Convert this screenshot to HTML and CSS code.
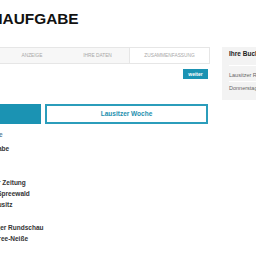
FILE: index.html
```html
<!DOCTYPE html>
<html lang="de">
<head>
<meta charset="utf-8">
<title>Anzeigenaufgabe</title>
<link rel="stylesheet" href="styles.css">
</head>
<body>
<div class="page">
  <main class="main">
    <h1 class="title">ANZEIGENAUFGABE</h1>
    <nav class="steps">
      <span class="step">Ausgabe</span>
      <span class="step">Anzeige</span>
      <span class="step">Ihre Daten</span>
      <span class="step step-current">Zusammenfassung</span>
    </nav>
    <div class="actions"><button class="btn-next">weiter</button></div>
    <div class="choice">
      <button class="opt opt-active">Lausitzer Rundschau</button>
      <button class="opt">Lausitzer Woche</button>
    </div>
    <div class="editions">
      <ul class="group group-top">
        <li class="item item-link">Sämtliche</li>
        <li class="item">Teilausgabe</li>
      </ul>
      <ul class="group">
        <li class="item">Lausitzer Zeitung</li>
        <li class="item">Lübben Spreewald</li>
        <li class="item">Niederlausitz</li>
      </ul>
      <ul class="group">
        <li class="item">Herzberger Rundschau</li>
        <li class="item">Kreis Spree-Neiße</li>
      </ul>
    </div>
  </main>
  <aside class="side">
    <h2 class="side-title">Ihre Buchung</h2>
    <p class="side-row">Lausitzer Rundschau</p>
    <p class="side-row">Donnerstag, 12.05.</p>
  </aside>
</div>
</body>
</html>
```

FILE: styles.css
```css
* { box-sizing: border-box; }
html, body { margin: 0; padding: 0; background: #fff; }
body {
  font-family: "Liberation Sans", Arial, sans-serif;
  overflow: hidden;
  width: 256px;
  height: 256px;
}
.page {
  display: flex;
  align-items: flex-start;
}
.main {
  flex: none;
  width: 284px;
  margin-left: -74px;
}
.title {
  margin: 11px 0 0 -3px;
  font-size: 15.4px;
  line-height: 15px;
  font-weight: 700;
  color: #111;
}
.steps {
  display: grid;
  grid-template-columns: 72px 68px 63px 81px;
  margin-top: 21px;
  height: 17px;
  border-top: 1px solid #e6e6e6;
  border-bottom: 1px solid #e6e6e6;
  background: #f7f7f7;
}
.step {
  font-size: 4.8px;
  line-height: 15px;
  text-transform: uppercase;
  text-align: center;
  color: #a8a8a8;
}
.step-current {
  background: #fff;
  border-left: 1px solid #e6e6e6;
  border-right: 1px solid #e6e6e6;
}
.actions {
  display: flex;
  justify-content: flex-end;
  margin-top: 5px;
  padding-right: 2px;
}
.btn-next {
  width: 25px;
  height: 10px;
  padding: 0;
  border: 0;
  background: #1b93b3;
  color: #fff;
  font: 700 5px/10px "Liberation Sans", Arial, sans-serif;
}
.choice {
  display: grid;
  grid-template-columns: 165px 163px;
  gap: 4px;
  margin-top: 25px;
  margin-left: -50px;
}
.opt {
  height: 20px;
  padding: 0;
  border: 2px solid #2b9dbb;
  background: #fff;
  color: #1d8fae;
  font: 700 6.5px/16px "Liberation Sans", Arial, sans-serif;
}
.opt-active {
  background: #1b93b3;
  border-color: #1b93b3;
  color: #fff;
}
.editions {
  margin-left: 46px;
  margin-top: 5px;
}
.group {
  list-style: none;
  margin: 0;
  padding: 0;
}
.group + .group {
  margin-top: 12px;
}
.group-top {
  margin-bottom: 23px;
}
.item {
  font-size: 6.5px;
  line-height: 11px;
  font-weight: 700;
  color: #333;
  white-space: nowrap;
}
.item-link {
  color: #5f7f98;
  margin-bottom: 3px;
}
.side {
  flex: none;
  width: 100px;
  margin-left: 12px;
  margin-top: 47px;
  padding: 2px 7px 6px;
  background: #f3f3f3;
}
.side-title {
  margin: 0;
  padding-bottom: 7px;
  border-bottom: 1px solid #fff;
  font-size: 6.5px;
  line-height: 9px;
  font-weight: 700;
  color: #222;
}
.side-row {
  margin: 0;
  padding: 6px 0 3px;
  font-size: 5.5px;
  line-height: 6px;
  color: #666;
  white-space: nowrap;
}
.side-row + .side-row {
  padding-top: 3px;
  border-top: 1px solid #fff;
}
```
